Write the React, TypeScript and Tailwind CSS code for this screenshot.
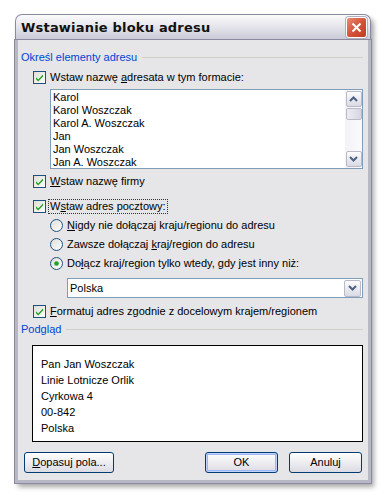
import React from "react";

const font = { fontFamily: '"Liberation Sans", Arial, sans-serif' };

const Check = ({ checked = true }: { checked?: boolean }) => (
  <svg width="13" height="13" viewBox="0 0 13 13" className="shrink-0">
    <defs>
      <linearGradient id="cbg" x1="0" y1="0" x2="1" y2="1">
        <stop offset="0" stopColor="#dcdcd7" />
        <stop offset="1" stopColor="#ffffff" />
      </linearGradient>
    </defs>
    <rect x="0.5" y="0.5" width="12" height="12" fill="url(#cbg)" stroke="#1c5180" />
    {checked && (
      <path d="M3 6.2 L5.2 8.6 L10 3.6 L10 5.6 L5.2 10.6 L3 8.2 Z" fill="#21a121" />
    )}
  </svg>
);

const Radio = ({ checked = false }: { checked?: boolean }) => (
  <svg width="13" height="13" viewBox="0 0 13 13" className="shrink-0">
    <defs>
      <linearGradient id="rbg" x1="0" y1="0" x2="1" y2="1">
        <stop offset="0" stopColor="#dcdcd7" />
        <stop offset="1" stopColor="#ffffff" />
      </linearGradient>
    </defs>
    <circle cx="6.5" cy="6.5" r="6" fill="url(#rbg)" stroke="#1c5180" />
    {checked && <circle cx="6.5" cy="6.5" r="2.3" fill="#21a121" />}
  </svg>
);

const Chevron = ({ up = false }: { up?: boolean }) => (
  <svg width="9" height="6" viewBox="0 0 9 6">
    <path
      d={up ? "M1 5 L4.5 1.5 L8 5" : "M1 1 L4.5 4.5 L8 1"}
      fill="none"
      stroke="#4d6185"
      strokeWidth="2"
    />
  </svg>
);

const ScrollBtn = ({ up }: { up?: boolean }) => (
  <div className="h-[16px] w-[16px] flex items-center justify-center rounded-[2px] border border-[#b9bac9] bg-gradient-to-b from-[#fdfdfd] to-[#d9dae4]">
    <Chevron up={up} />
  </div>
);

const GroupLabel = ({ text }: { text: string }) => (
  <div className="flex items-center h-[13px] pl-[3px] pr-[5px]">
    <span className="text-[#0046d5] leading-[13px]">{text}</span>
    <div className="flex-1 ml-[5px] h-px bg-[#d0d0c8]" />
  </div>
);

const Btn = ({ children, def = false, w }: { children: React.ReactNode; def?: boolean; w: string }) => (
  <div
    className={`${w} h-[21px] rounded-[3px] border border-[#003c74] flex items-center justify-center bg-gradient-to-b from-[#ffffff] to-[#dcdbe3] ${
      def ? "shadow-[inset_0_0_0_1px_#c1d3fb,inset_0_0_0_2px_#9db7f4]" : ""
    }`}
  >
    {children}
  </div>
);

export default function App() {
  const names = ["Karol", "Karol Woszczak", "Karol A. Woszczak", "Jan", "Jan Woszczak", "Jan A. Woszczak"];
  const preview = ["Pan Jan Woszczak", "Linie Lotnicze Orlik", "Cyrkowa 4", "00-842", "Polska"];
  return (
    <div className="w-[385px] h-[498px] bg-white pl-[15px] pt-[14px] text-[11px] leading-[13px] text-black" style={font}>
      <div className="w-[356px] h-[469px] flex flex-col rounded-t-[7px] shadow-[3px_4px_5px_rgba(0,0,0,0.35)]">
        <div className="h-[26px] shrink-0 rounded-t-[7px] border border-b-0 border-[#8a8a9e] bg-gradient-to-b from-[#fbfbfc] via-[#e3e3ea] to-[#c9c9d6] flex items-center pl-[5px] pr-[3px]">
          <span className="flex-1 text-[13px] font-bold text-[#111] tracking-[0.2px]" style={{ fontFamily: '"DejaVu Sans", sans-serif' }}>
            Wstawianie bloku adresu
          </span>
          <div className="w-[21px] h-[21px] rounded-[3px] border border-white bg-gradient-to-br from-[#e98a72] via-[#d5533a] to-[#c03a24] flex items-center justify-center shadow-[0_0_0_1px_#b0b0c0]">
            <svg width="11" height="11" viewBox="0 0 11 11">
              <path d="M1.5 1.5 L9.5 9.5 M9.5 1.5 L1.5 9.5" stroke="white" strokeWidth="2" />
            </svg>
          </div>
        </div>
        <div className="flex-1 border-[3px] border-t-0 border-[#b7b7c6] shadow-[0_0_0_1px_#8a8a9e] bg-[#e6e5e8] flex flex-col pt-[11px]">
          <GroupLabel text="Określ elementy adresu" />
          <div className="flex items-center h-[13px] mt-[7px] pl-[15px] gap-[4px]">
            <Check />
            <span>
              Wstaw nazwę <u>a</u>dresata w tym formacie:
            </span>
          </div>
          <div className="ml-[32px] mt-[5px] w-[313px] h-[80px] border border-[#7f9db9] bg-white flex">
            <div className="flex-1 pl-[2px] pt-[1px]">
              {names.map((n) => (
                <div key={n} className="h-[13px] leading-[13px]">
                  {n}
                </div>
              ))}
            </div>
            <div className="w-[17px] flex flex-col items-center bg-gradient-to-r from-[#f3f3f7] to-[#fbfbfd] py-px">
              <ScrollBtn up />
              <div className="h-[12px] w-[16px] mt-px rounded-[2px] border border-[#b9bac9] bg-gradient-to-r from-[#ececf2] to-[#d5d6e0]" />
              <div className="flex-1" />
              <ScrollBtn />
            </div>
          </div>
          <div className="flex items-center h-[13px] mt-[6px] pl-[15px] gap-[4px]">
            <Check />
            <span>
              <u>W</u>staw nazwę firmy
            </span>
          </div>
          <div className="flex items-center h-[13px] mt-[12px] pl-[15px] gap-[3px]">
            <Check />
            <span className="outline outline-1 outline-dotted outline-[#333] px-px leading-[13px]">
              W<u>s</u>taw adres pocztowy:
            </span>
          </div>
          <div className="flex items-center h-[13px] mt-[6px] pl-[32px] gap-[4px]">
            <Radio />
            <span>
              <u>N</u>igdy nie dołączaj kraju/regionu do adresu
            </span>
          </div>
          <div className="flex items-center h-[13px] mt-[6px] pl-[32px] gap-[4px]">
            <Radio />
            <span>
              Zawsze dołączaj <u>k</u>raj/region do adresu
            </span>
          </div>
          <div className="flex items-center h-[13px] mt-[6px] pl-[32px] gap-[4px]">
            <Radio checked />
            <span>
              Do<u>ł</u>ącz kraj/region tylko wtedy, gdy jest inny niż:
            </span>
          </div>
          <div className="ml-[49px] mt-[8px] w-[296px] h-[20px] border border-[#7f9db9] bg-white flex items-center pl-[2px] pr-px">
            <span className="flex-1">Polska</span>
            <div className="w-[17px] h-[17px] flex items-center justify-center rounded-[2px] border border-[#b9bac9] bg-gradient-to-b from-[#fdfdfd] to-[#d9dae4]">
              <Chevron />
            </div>
          </div>
          <div className="flex items-center h-[13px] mt-[7px] pl-[15px] gap-[4px]">
            <Check />
            <span>
              <u>F</u>ormatuj adres zgodnie z docelowym krajem/regionem
            </span>
          </div>
          <div className="mt-[5px]">
            <GroupLabel text="Podgląd" />
          </div>
          <div className="ml-[14px] mt-[9px] w-[331px] h-[97px] border border-black bg-white pl-[8px] pt-[10px]">
            {preview.map((p) => (
              <div key={p} className="h-[16px] leading-[16px]">
                {p}
              </div>
            ))}
          </div>
          <div className="flex items-center mt-[10px] pl-[6px] pr-[6px]">
            <Btn w="w-[90px]">
              <span>
                <u>D</u>opasuj pola...
              </span>
            </Btn>
            <div className="flex-1" />
            <Btn w="w-[73px]" def>
              OK
            </Btn>
            <div className="w-[11px]" />
            <Btn w="w-[73px]">Anuluj</Btn>
          </div>
        </div>
      </div>
    </div>
  );
}
